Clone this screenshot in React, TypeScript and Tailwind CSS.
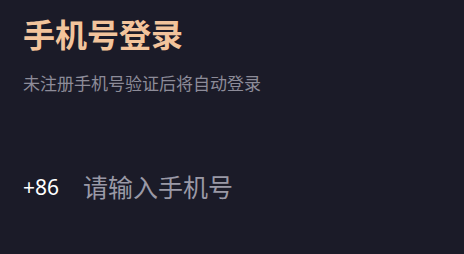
export default function App() {
  return (
    <div
      className="h-[254px] w-[464px] bg-[#1b1b28] px-[23px] pt-[14px]"
      style={{ fontFamily: '"Noto Sans", "Noto Sans CJK SC", sans-serif' }}
    >
      <h1 className="text-[32px] font-bold leading-[42px] text-[#f2c49c]">手机号登录</h1>
      <p className="mt-[17px] text-[17px] leading-[22px] text-[#8d8c99]">未注册手机号验证后将自动登录</p>
      <div className="mt-[74px] flex items-center">
        <span className="w-[60px] text-[21px] text-white">+86</span>
        <input
          className="flex-1 bg-transparent text-[25px] text-white outline-none placeholder:text-[#9a99a6]"
          placeholder="请输入手机号"
        />
      </div>
    </div>
  )
}
